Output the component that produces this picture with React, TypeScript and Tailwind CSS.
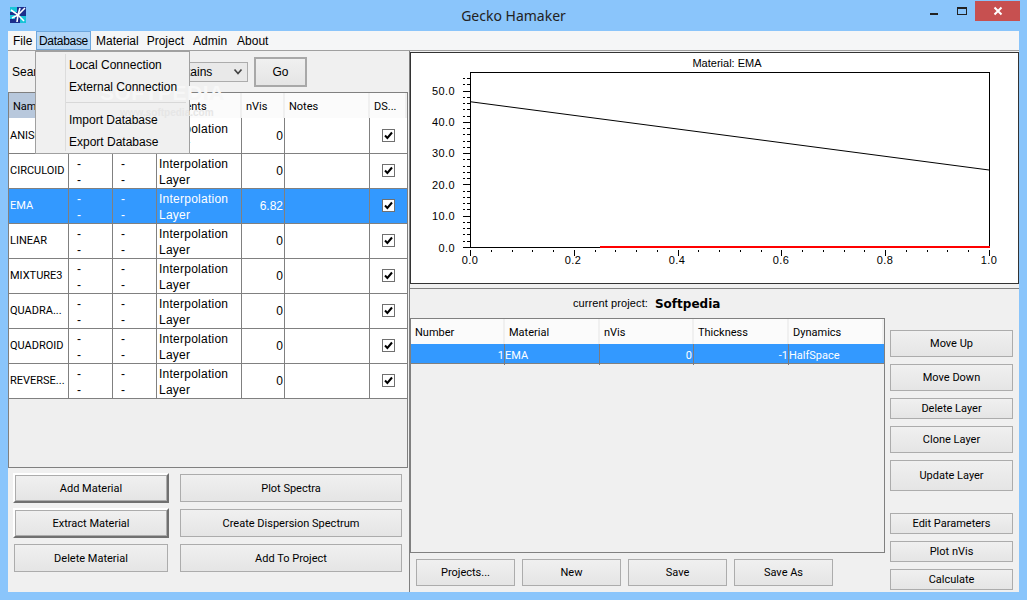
import React from "react";

const font = "font-['Liberation_Sans','Noto_Sans',sans-serif]";
const narrow = "font-['Roboto',sans-serif] text-[11px]";

function Btn({ label, className = "" }: { label: string; className?: string }) {
  return (
    <div className={`flex items-center justify-center border border-[#acacac] bg-gradient-to-b from-[#f0f0f0] to-[#e5e5e5] pt-[2px] text-black ${narrow} ${className}`}>
      {label}
    </div>
  );
}

function DefaultBtn({ label }: { label: string }) {
  return (
    <div className="flex h-[30px] border-2 border-t-white border-l-white border-r-[#707070] border-b-[#707070] bg-white">
      <div className={`flex flex-1 items-center justify-center border border-[#acacac] bg-gradient-to-b from-[#f0f0f0] to-[#e5e5e5] pt-[2px] text-black ${narrow}`}>
        {label}
      </div>
    </div>
  );
}

function Check() {
  return (
    <div className="flex h-[13px] w-[13px] items-center justify-center border border-[#707070] bg-white">
      <svg width="11" height="11" viewBox="0 0 11 11">
        <path d="M2 5.5 L4.4 8 L9 2.5" fill="none" stroke="#000" strokeWidth="2" />
      </svg>
    </div>
  );
}

const rows = [
  ["ANISOTR...", "0"],
  ["CIRCULOID", "0"],
  ["EMA", "6.82"],
  ["LINEAR", "0"],
  ["MIXTURE3", "0"],
  ["QUADRA...", "0"],
  ["QUADROID", "0"],
  ["REVERSE...", "0"],
];

const cols = "grid grid-cols-[60px_44px_44px_85px_43px_85px_37px]";

function MaterialRow({ name, nvis }: { name: string; nvis: string }) {
  const sel = name === "EMA";
  const line = "border-r border-b border-[#808080]";
  const text = sel ? "bg-[#3399ff] text-white" : "bg-white text-black";
  return (
    <div className={`${cols} h-[35px] text-[12px] leading-[16px] ${text}`}>
      <div className={`${line} flex items-center overflow-hidden pl-px font-['Roboto',sans-serif] text-[11px]`}>{name}</div>
      <div className={`${line} flex flex-col justify-center pl-[8px] pt-[3px]`}><span>-</span><span>-</span></div>
      <div className={`${line} flex flex-col justify-center pl-[8px] pt-[3px]`}><span>-</span><span>-</span></div>
      <div className={`${line} flex flex-col justify-center pl-[2px] pt-[3px] tracking-[0.25px]`}><span>Interpolation</span><span>Layer</span></div>
      <div className={`${line} flex items-center justify-end pr-px`}>{nvis}</div>
      <div className={line} />
      <div className="flex items-center justify-center border-b border-[#808080]"><Check /></div>
    </div>
  );
}

function Header({ label, active }: { label: string; active?: boolean }) {
  return (
    <div className={`flex items-center overflow-hidden border-r-2 border-[#f0f0f0] pl-[4px] pt-[4px] ${narrow} ${active ? "bg-[#b8c8dc]" : "bg-[#fbfbfb]"}`}>
      {label}
    </div>
  );
}

function Chart() {
  const xMinor: number[] = [];
  for (let i = 0; i <= 25; i++) xMinor.push(470 + i * 20.76);
  const yMinor: number[] = [];
  for (let i = 0; i <= 27; i++) yMinor.push(247 - i * 6.26);
  return (
    <svg className="block" width="609" height="232" viewBox="410 52 609 232">
      <g shapeRendering="crispEdges" stroke="#000">
        <rect x="470.5" y="72.5" width="519" height="175" fill="none" />
        {xMinor.map((x, i) => (
          <line key={i} x1={Math.round(x) + 0.5} x2={Math.round(x) + 0.5} y1="250" y2={i % 5 === 0 ? 256 : 252} />
        ))}
        {yMinor.map((y, i) => (
          <g key={i}>
            {i % 5 === 0 ? (
              <line x1="463" x2="470" y1={Math.round(y) + 0.5} y2={Math.round(y) + 0.5} />
            ) : (
              <>
                <line x1="463" x2="465" y1={Math.round(y) + 0.5} y2={Math.round(y) + 0.5} />
                <line x1="467" x2="470" y1={Math.round(y) + 0.5} y2={Math.round(y) + 0.5} />
              </>
            )}
          </g>
        ))}
      </g>
      <line x1="470" y1="101.7" x2="989" y2="170" stroke="#000" strokeWidth="1" />
      <rect x="600" y="246" width="390" height="2" fill="#ff0000" />
      <g fontSize="11" fill="#000" fontFamily="'Liberation Sans', sans-serif">
        <text x="727" y="67" textAnchor="middle">Material: EMA</text>
        {[["50.0", 95], ["40.0", 126], ["30.0", 157], ["20.0", 189], ["10.0", 220], ["0.0", 252]].map(([t, y]) => (
          <text key={String(t)} x="455" y={Number(y)} textAnchor="end" letterSpacing="0.4">{t}</text>
        ))}
        {[["0.0", 470], ["0.2", 573], ["0.4", 677], ["0.6", 781], ["0.8", 885], ["1.0", 989]].map(([t, x]) => (
          <text key={String(t)} x={Number(x)} y="264" textAnchor="middle" letterSpacing="0.4">{t}</text>
        ))}
      </g>
    </svg>
  );
}

export default function App() {
  return (
    <div className={`${font} relative flex h-[600px] w-[1027px] flex-col overflow-hidden bg-[#8ac5fb] text-black`}>
      <div className="relative flex h-[31px] shrink-0 items-center justify-center text-[14px] text-[#222]">
        <svg className="absolute left-[10px] top-[7px]" width="16" height="16" viewBox="0 0 16 16" shapeRendering="crispEdges">
          <rect width="16" height="16" fill="#1c2f8c" />
          <rect x="0" y="0" width="7" height="5" fill="#19c4d8" />
          <rect x="10" y="9" width="6" height="7" fill="#19c4d8" />
          <rect x="0" y="8" width="5" height="4" fill="#19c4d8" />
          <g stroke="#fff" strokeWidth="1.6" fill="none" shapeRendering="auto">
            <path d="M1 3 L8 8 L15 1" />
            <path d="M8 8 L2 11" />
            <path d="M8 8 L10 1" />
            <path d="M8 8 L14 14" />
            <path d="M8 8 L7 15" />
          </g>
        </svg>
        <span className="-mt-px font-['Noto_Sans',sans-serif]">Gecko Hamaker</span>
        <div className="absolute left-[930px] top-[13px] h-[2px] w-[8px] bg-[#222]" />
        <div className="absolute left-[957px] top-[7px] h-[8px] w-[10px] border border-t-2 border-[#222]" />
        <div className="absolute left-[975px] top-px flex h-[20px] w-[45px] items-center justify-center bg-[#c75050]">
          <svg width="10" height="10" viewBox="0 0 10 10">
            <path d="M1.5 1.5 L8.5 8.5 M8.5 1.5 L1.5 8.5" stroke="#fff" strokeWidth="2" />
          </svg>
        </div>
      </div>

      <div className="ml-[8px] flex h-[561px] w-[1011px] shrink-0 flex-col bg-[#f0f0f0]">
        <div className="flex h-[20px] shrink-0 items-center border-b border-[#a0a0a0] bg-[#f5f6f7] pl-[1px] text-[12px]">
          <span className="w-[26px] pl-[4px]">File</span>
          <span className="ml-px flex h-[19px] w-[55px] items-center border border-[#6ea7dd] bg-[#b5d7f7] pl-[2px] tracking-[-0.3px]">Database</span>
          <span className="ml-[5px]">Material</span>
          <span className="ml-[8px]">Project</span>
          <span className="ml-[9px]">Admin</span>
          <span className="ml-[10px]">About</span>
        </div>

        <div className="flex min-h-0 flex-1">
          <div className="flex w-[402px] shrink-0 flex-col border-r border-[#808080]">
            <div className="flex h-[41px] shrink-0 items-center pl-[4px] text-[12px]">
              <span className="w-[48px]">Search:</span>
              <div className="h-[20px] w-[95px] border border-[#acacac] bg-white" />
              <div className="ml-[5px] flex h-[20px] w-[88px] items-center justify-between border border-[#acacac] bg-[#e9e9e9] pl-[4px] pr-[4px]">
                <span>Contains</span>
                <svg width="10" height="8" viewBox="0 0 10 8"><path d="M1.5 1.5 L5 5.5 L8.5 1.5" fill="none" stroke="#444" strokeWidth="1.7" /></svg>
              </div>
              <div className="ml-[6px] flex h-[30px] w-[53px] items-center justify-center border-2 border-[#a8a8a8] bg-gradient-to-b from-[#f0f0f0] to-[#e5e5e5]">Go</div>
            </div>

            <div className="h-[376px] w-[400px] shrink-0 border border-[#808080] bg-[#efefef]">
              <div className={`${cols} h-[25px]`}>
                <Header label="Name" active />
                <Header label="Min" />
                <Header label="Max" />
                <Header label="Elements" />
                <Header label="nVis" />
                <Header label="Notes" />
                <Header label="DS..." />
              </div>
              {rows.map(([n, v]) => (
                <MaterialRow key={n} name={n} nvis={v} />
              ))}
            </div>

            <div className="grid grid-cols-[156px_222px] gap-x-[11px] gap-y-[5px] pl-[5px] pt-[5px]">
              <DefaultBtn label="Add Material" />
              <Btn label="Plot Spectra" className="my-px" />
              <DefaultBtn label="Extract Material" />
              <Btn label="Create Dispersion Spectrum" className="my-px" />
              <Btn label="Delete Material" className="m-px h-[28px]" />
              <Btn label="Add To Project" className="my-px h-[28px]" />
            </div>
          </div>

          <div className="flex min-w-0 flex-1 flex-col">
            <div className="mt-px h-[232px] shrink-0 border border-[#333] bg-white">
              <div className="-m-px"><Chart /></div>
            </div>
            <div className="mt-[4px] flex h-[30px] shrink-0 items-center gap-[7px] border-t border-[#808080] pl-[163px]">
              <span className="text-[11px] tracking-[0.1px]">current project:</span>
              <span className="pt-px font-['DejaVu_Sans',sans-serif] text-[12px] font-bold">Softpedia</span>
            </div>
            <div className="flex min-h-0 flex-1">
              <div className="flex w-[475px] shrink-0 flex-col">
                <div className="h-[235px] shrink-0 border border-[#808080] bg-[#f0f0f0]">
                  <div className={`grid h-[25px] grid-cols-[94px_95px_94px_95px_95px] ${narrow}`}>
                    {["Number", "Material", "nVis", "Thickness", "Dynamics"].map((h) => (
                      <div key={h} className="flex items-center border-r-2 border-[#f0f0f0] bg-[#fbfbfb] pl-[4px] pt-[4px]">{h}</div>
                    ))}
                  </div>
                  <div className={`grid h-[20px] grid-cols-[94px_95px_94px_95px_95px] border-b border-[#808080] bg-[#3399ff] text-white ${narrow}`}>
                    <div className="flex items-center justify-end border-r border-[#7b7b80] pt-[4px]">1</div>
                    <div className="flex items-center border-r border-[#7b7b80] pt-[4px]">EMA</div>
                    <div className="flex items-center justify-end border-r border-[#7b7b80] pr-px pt-[4px]">0</div>
                    <div className="flex items-center justify-end border-r border-[#7b7b80] pt-[4px]">-1</div>
                    <div className="flex items-center pt-[4px]">HalfSpace</div>
                  </div>
                </div>
                <div className="flex gap-[7px] pl-[6px] pt-[6px]">
                  <Btn label="Projects..." className="h-[27px] w-[99px]" />
                  <Btn label="New" className="h-[27px] w-[99px]" />
                  <Btn label="Save" className="h-[27px] w-[99px]" />
                  <Btn label="Save As" className="h-[27px] w-[99px]" />
                </div>
              </div>
              <div className="ml-[5px] flex w-[123px] flex-col pt-[12px]">
                <Btn label="Move Up" className="h-[27px]" />
                <Btn label="Move Down" className="mt-[7px] h-[27px]" />
                <Btn label="Delete Layer" className="mt-[7px] h-[21px]" />
                <Btn label="Clone Layer" className="mt-[7px] h-[27px]" />
                <Btn label="Update Layer" className="mt-[7px] h-[31px]" />
                <Btn label="Edit Parameters" className="mt-[22px] h-[21px]" />
                <Btn label="Plot nVis" className="mt-[7px] h-[21px]" />
                <Btn label="Calculate" className="mt-[7px] h-[21px]" />
              </div>
            </div>
          </div>
        </div>
      </div>

      <div className="absolute left-[35px] top-[51px] h-[103px] w-[155px] border border-[#a0a0a0] bg-[#f0f0f0] text-[12px]">
        <div className="absolute bottom-[2px] left-[29px] top-[2px] w-px bg-[#dcdcdc]" />
        <div className="pointer-events-none absolute left-[64px] top-[25px] text-[21px] font-bold tracking-[0.5px] text-[#f7f7f7]">SOFTPEDIA</div>
        <div className="pointer-events-none absolute left-[84px] top-[53px] text-[10px] font-bold text-[#e6e6e6]">www.softpedia.com</div>
        <div className="relative pl-[33px] pt-[2px]">
          <div className="flex h-[22px] items-center">Local Connection</div>
          <div className="flex h-[22px] items-center">External Connection</div>
          <div className="mb-[6px] -ml-[3px] mr-[3px] mt-[4px] h-px bg-[#d8d8d8]" />
          <div className="flex h-[22px] items-center">Import Database</div>
          <div className="flex h-[22px] items-center">Export Database</div>
        </div>
      </div>
    </div>
  );
}
